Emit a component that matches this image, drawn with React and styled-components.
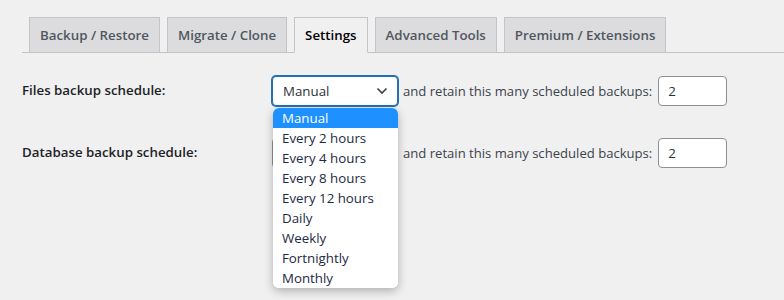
import React from "react";
import styled, { createGlobalStyle } from "styled-components";

const GlobalStyle = createGlobalStyle`
  html, body {
    margin: 0;
    background: #f0f0f1;
    font-family: "Open Sans", "Noto Sans", sans-serif;
    color: #3c434a;
  }
`;

const tabs = [
  "Backup / Restore",
  "Migrate / Clone",
  "Settings",
  "Advanced Tools",
  "Premium / Extensions",
];

const options = [
  "Manual",
  "Every 2 hours",
  "Every 4 hours",
  "Every 8 hours",
  "Every 12 hours",
  "Daily",
  "Weekly",
  "Fortnightly",
  "Monthly",
];

function Chevron() {
  return (
    <svg width="12" height="8" viewBox="0 0 12 8">
      <path d="M1.5 1.5 L6 6 L10.5 1.5" fill="none" stroke="#3c434a" strokeWidth="1.6" />
    </svg>
  );
}

export default function App() {
  return (
    <>
      <GlobalStyle />
      <Page>
        <TabBar>
          {tabs.map((t) => (
            <Tab key={t} $active={t === "Settings"}>
              {t}
            </Tab>
          ))}
        </TabBar>
        <Form>
          <Row>
            <Label>Files backup schedule:</Label>
            <SelectWrap>
              <Select $focused>
                <span>Manual</span>
                <Chevron />
              </Select>
              <Dropdown>
                {options.map((o, i) => (
                  <Option key={o} $selected={i === 0}>
                    {o}
                  </Option>
                ))}
              </Dropdown>
            </SelectWrap>
            <Retain>and retain this many scheduled backups:</Retain>
            <NumberBox>2</NumberBox>
          </Row>
          <Row>
            <Label>Database backup schedule:</Label>
            <SelectWrap>
              {/* covered by the open list above, only its edge shows */}
              <Select>
                <span />
                <Chevron />
              </Select>
            </SelectWrap>
            <Retain>and retain this many scheduled backups:</Retain>
            <NumberBox>2</NumberBox>
          </Row>
        </Form>
      </Page>
    </>
  );
}

const Page = styled.div`
  padding: 17px 0 0 22px;
  height: 300px;
  box-sizing: border-box;
`;

const TabBar = styled.div`
  display: flex;
  align-items: flex-end;
  border-bottom: 1px solid #c3c4c7;
`;

const Tab = styled.div`
  margin-left: 7px;
  padding: 5px 10px;
  border: 1px solid #c3c4c7;
  border-bottom: none;
  background: ${(p) => (p.$active ? "#f0f0f1" : "#dcdcde")};
  color: ${(p) => (p.$active ? "#000" : "#50575e")};
  font-size: 13.3px;
  font-weight: 600;
  line-height: 24px;
  white-space: nowrap;
  ${(p) =>
    p.$active &&
    `
    border-bottom: 1px solid #f0f0f1;
    margin-bottom: -1px;
  `}
`;

const Form = styled.div`
  margin-top: 7px;
`;

const Row = styled.div`
  display: flex;
  align-items: center;
  padding: 16px 0;
`;

const Label = styled.div`
  width: 250px;
  flex-shrink: 0;
  margin-top: -3px;
  font-size: 13.3px;
  font-weight: 600;
  color: #1d2327;
`;

const SelectWrap = styled.div`
  position: relative;
`;

const Select = styled.div`
  box-sizing: border-box;
  width: 126px;
  height: 30px;
  display: flex;
  align-items: center;
  justify-content: space-between;
  padding: 0 9px 0 10px;
  background: #fff;
  border: 1px solid ${(p) => (p.$focused ? "#2271b1" : "#8c8f94")};
  box-shadow: ${(p) => (p.$focused ? "0 0 0 1px #2271b1" : "none")};
  border-radius: 4px;
  font-size: 13.3px;
  color: #2c3338;
`;

const Dropdown = styled.div`
  position: absolute;
  top: 32px;
  left: 1px;
  width: 125px;
  z-index: 5;
  background: #fff;
  border-radius: 6px;
  overflow: hidden;
  box-shadow: 0 3px 10px rgba(0, 0, 0, 0.28);
`;

const Option = styled.div`
  height: 20px;
  line-height: 20px;
  padding-left: 9px;
  font-size: 13.3px;
  background: ${(p) => (p.$selected ? "#1e90ff" : "#fff")};
  color: ${(p) => (p.$selected ? "#fff" : "#1d2a3f")};
`;

const Retain = styled.div`
  margin-left: 5px;
  font-size: 13.1px;
  color: #3c434a;
  white-space: nowrap;
`;

const NumberBox = styled.div`
  box-sizing: border-box;
  margin-left: 6px;
  width: 69px;
  height: 30px;
  line-height: 28px;
  padding: 0 9px;
  background: #fff;
  border: 1px solid #8c8f94;
  border-radius: 4px;
  font-size: 13.3px;
  color: #2c3338;
`;
